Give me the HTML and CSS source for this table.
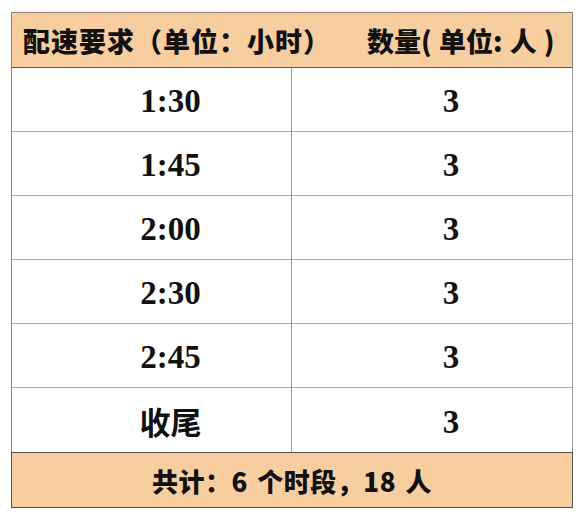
FILE: index.html
```html
<!DOCTYPE html>
<html lang="zh">
<head>
<meta charset="utf-8">
<title>配速要求</title>
<link rel="stylesheet" href="styles.css">
</head>
<body>
<div class="sheet">
  <div class="head">
    <span class="h1">配速要求（单位：小时）</span>
    <span class="h2">数量( 单位: 人 )</span>
  </div>
  <div class="grid">
    <div class="cell left">1:30</div><div class="cell">3</div>
    <div class="cell left">1:45</div><div class="cell">3</div>
    <div class="cell left">2:00</div><div class="cell">3</div>
    <div class="cell left">2:30</div><div class="cell">3</div>
    <div class="cell left">2:45</div><div class="cell">3</div>
    <div class="cell left cjk">收尾</div><div class="cell">3</div>
  </div>
  <div class="foot">共计：6 个时段，18 人</div>
</div>
</body>
</html>
```
FILE: styles.css
```css
html, body {
  margin: 0;
  padding: 0;
  background: #ffffff;
}

.sheet {
  margin: 12px 0 0 11px;
  width: 562px;
}

.head {
  box-sizing: border-box;
  height: 56px;
  background: #f8cea0;
  border: 1px solid #8f8376;
  border-bottom-color: #5e5a56;
  display: flex;
  align-items: center;
  padding-left: 11px;
  font-family: "Noto Sans CJK SC", sans-serif;
  font-weight: 900;
  font-size: 27px;
  color: #111111;
  white-space: nowrap;
}

.h1 {
  letter-spacing: 1px;
}

.h2 {
  margin-left: 36px;
  letter-spacing: 0;
  word-spacing: 1px;
}

.grid {
  display: grid;
  grid-template-columns: 280px 280px;
  border-left: 1px solid #8a8a8a;
  border-right: 1px solid #9a9a9a;
}

.cell {
  box-sizing: border-box;
  height: 64px;
  border-bottom: 1px solid #a8a8a8;
  display: flex;
  align-items: center;
  justify-content: center;
  padding-left: 38px;
  padding-top: 4px;
  font-family: "Liberation Serif", "Noto Sans CJK SC", serif;
  font-weight: 700;
  font-size: 33px;
  color: #111111;
}

.left {
  border-right: 1px solid #9a9a9a;
}

.cjk {
  padding-top: 0;
  font-family: "Noto Sans CJK SC", serif;
  font-size: 31px;
}

.grid .cell:nth-last-child(-n+2) {
  border-bottom: none;
}

.foot {
  box-sizing: border-box;
  height: 56px;
  background: #f8cea0;
  border: 1px solid #55504b;
  display: flex;
  align-items: center;
  justify-content: center;
  font-family: "Noto Sans CJK SC", sans-serif;
  font-weight: 900;
  font-size: 26px;
  letter-spacing: 0.5px;
  word-spacing: 3px;
  color: #111111;
}
```
